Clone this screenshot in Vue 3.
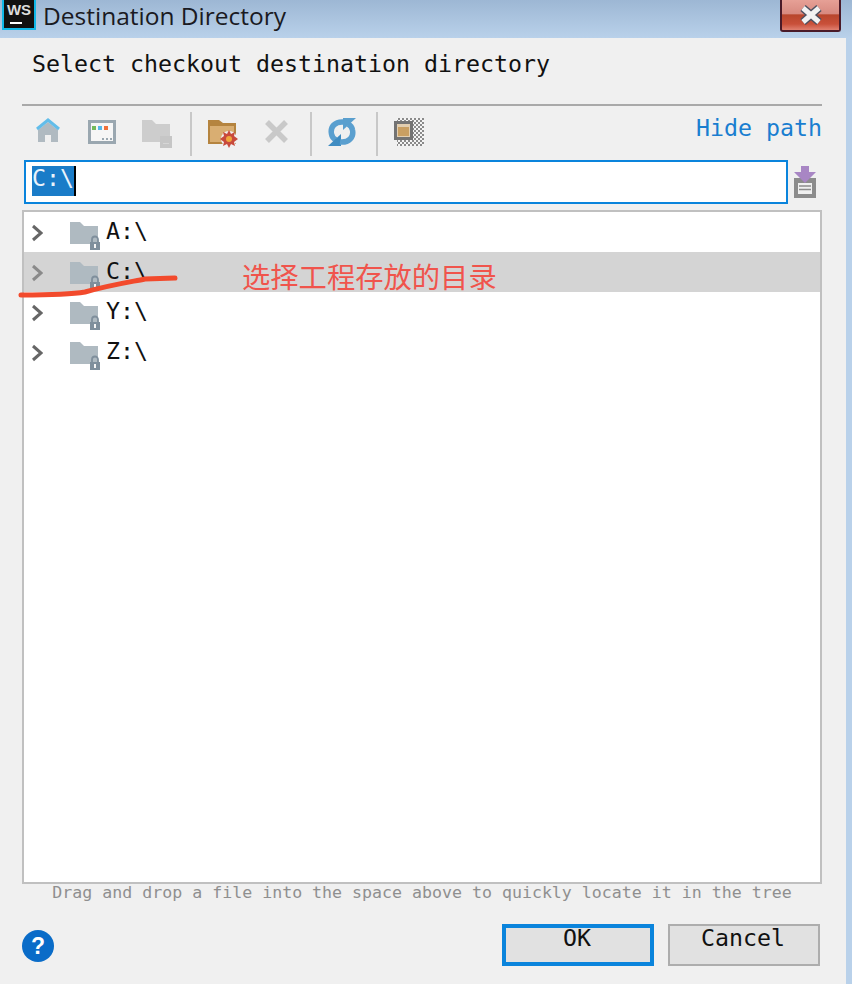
<template>
  <div class="window">
    <div class="titlebar">
      <svg class="logo" width="34" height="30" viewBox="0 0 34 30">
        <rect x="1" y="-1" width="32" height="30" fill="#111" stroke="#10b8e8" stroke-width="2" />
        <text x="17" y="15" text-anchor="middle" class="logo-text">WS</text>
        <rect x="8" y="22" width="12" height="2" fill="#fff" />
      </svg>
      <span class="title">Destination Directory</span>
      <div class="close">
        <svg width="26" height="20" viewBox="0 0 26 20">
          <path d="M5 3 L21 17 M21 3 L5 17" fill="none" stroke="#4c5060" stroke-width="8" />
          <path d="M5 3 L21 17 M21 3 L5 17" fill="none" stroke="#f2f2f2" stroke-width="5" />
        </svg>
      </div>
    </div>

    <div class="content">
      <div class="prompt">Select checkout destination directory</div>

      <div class="toolbar">
        <svg class="t-home" width="24" height="26" viewBox="0 0 24 26">
          <path d="M2 12 V24 H9 V17 H15 V24 H22 V12 L12 4 Z" fill="#b0bac1" />
          <path d="M1 11 L12 2 L23 11" fill="none" stroke="#62bdea" stroke-width="3" />
        </svg>
        <svg class="t-win" width="28" height="24" viewBox="0 0 28 24">
          <rect x="1.500" y="1.500" width="25" height="21" fill="#f6f6f6" stroke="#9aa7b0" stroke-width="3" />
          <rect x="4" y="6" width="4" height="4" fill="#74b95a" />
          <rect x="10" y="6" width="4" height="4" fill="#55b8e8" />
          <rect x="16" y="6" width="4" height="4" fill="#f0703a" />
          <rect x="14" y="18" width="2" height="2" fill="#9aa7b0" />
          <rect x="18" y="18" width="2" height="2" fill="#9aa7b0" />
          <rect x="22" y="18" width="2" height="2" fill="#9aa7b0" />
        </svg>
        <svg class="t-folder" width="30" height="28" viewBox="0 0 30 28">
          <path d="M0 0 H10 L14 4 H28 V22 H0 Z" fill="#cdcdcd" />
          <rect x="18" y="16" width="12" height="12" fill="#c6c6c6" />
          <rect x="21" y="23" width="6" height="1" fill="#d6d6d6" />
        </svg>
        <i class="sep"></i>
        <svg class="t-new" width="30" height="28" viewBox="0 0 30 28">
          <path d="M0 0 H11 L15 3 H28 V24 H0 Z" fill="#b5843f" />
          <path d="M2 6 H26 V22 H2 Z" fill="#d9ae72" />
          <circle cx="21" cy="19" r="8" fill="#f0f0f0" />
          <path d="M21 10 L23 14 L27 12 L26 16 L30 19 L26 22 L27 26 L23 24 L21 28 L19 24 L15 26 L16 22 L12 19 L16 16 L15 12 L19 14 Z" fill="#c84a3c" />
          <circle cx="21" cy="19" r="3" fill="#f0a63c" />
        </svg>
        <svg class="t-x" width="23" height="23" viewBox="0 0 23 23">
          <path d="M2 2 L21 21 M21 2 L2 21" stroke="#c9c9c9" stroke-width="5.500" />
        </svg>
        <i class="sep sep-x"></i>
        <svg class="t-sync" width="28" height="28" viewBox="0 0 28 28">
          <path d="M16 4 C7 3 2 9 3.500 16 C4 19 6 21 8 22" fill="none" stroke="#5a9fcf" stroke-width="5.500" />
          <path d="M0 28 L13 28 L13 16 Z" fill="#3f8cc2" />
          <path d="M12 24 C21 25 26 19 24.500 12 C24 9 22 7 20 6" fill="none" stroke="#5a9fcf" stroke-width="5.500" />
          <path d="M28 0 L15 0 L15 12 Z" fill="#5a9fce" />
        </svg>
        <i class="sep sep-sync"></i>
        <svg class="t-toggle" width="30" height="28" viewBox="0 0 30 28">
          <defs>
            <pattern id="chk" width="4" height="4" patternUnits="userSpaceOnUse">
              <rect width="4" height="4" fill="#f4f4f4" />
              <rect width="2" height="2" fill="#8a8a8a" />
              <rect x="2" y="2" width="2" height="2" fill="#8a8a8a" />
            </pattern>
          </defs>
          <rect x="3" y="0" width="27" height="28" fill="url(#chk)" />
          <rect x="1.500" y="4.500" width="16" height="16" fill="#e2ceb0" stroke="#737373" stroke-width="3" />
          <rect x="4" y="9" width="11" height="9" fill="#c99f62" />
        </svg>
        <span class="hide-path">Hide path</span>
      </div>

      <div class="path-row">
        <div class="path-input"><span class="selected">C:\</span></div>
        <svg class="import" width="22" height="32" viewBox="0 0 22 32">
          <path d="M0 12 H22 V32 H0 Z" fill="#8c8c8c" />
          <rect x="4" y="17" width="14" height="11" fill="#f0f0f0" />
          <path d="M5 20 H17 M5 23.500 H17" stroke="#8c8c8c" stroke-width="1.500" />
          <path d="M7 0 H15 V6 H22 L11 17 L0 6 H7 Z" fill="#a886c4" />
        </svg>
      </div>

      <div class="tree">
        <div v-for="(drive, index) in drives" :key="drive" class="row" :class="{ active: index === 1 }">
          <svg class="chevron" width="12" height="18" viewBox="0 0 12 18">
            <path d="M2 2 L10 9 L2 16" fill="none" stroke="currentColor" stroke-width="3" />
          </svg>
          <svg class="drive-icon" width="30" height="28" viewBox="0 0 30 28">
            <path d="M0 0 H10 L14 4 H28 V22 H0 Z" fill="#afbac1" />
            <path d="M22 20 V17.500 A3 3 0 0 1 28 17.500 V20" fill="none" stroke="#7f8f9c" stroke-width="1.800" />
            <rect x="20" y="20" width="10" height="8" fill="#7f8f9c" />
            <rect x="24" y="22" width="2" height="4" fill="#f4f4f4" />
          </svg>
          <span class="drive-name">{{ drive }}</span>
        </div>
      </div>

      <div class="hint">Drag and drop a file into the space above to quickly locate it in the tree</div>

      <div class="footer">
        <div class="help">?</div>
        <button class="btn primary" type="button">OK</button>
        <button class="btn" type="button">Cancel</button>
      </div>
    </div>

    <span class="note">选择工程存放的目录</span>
    <svg class="scribble" width="180" height="40" viewBox="0 0 180 40">
      <path d="M21 25 C45 25 68 25 85 22 C110 15 130 12 145 9 L175 8" fill="none" stroke="#f24a2c" stroke-width="5" stroke-linecap="round" />
    </svg>
  </div>
</template>

<script setup>
const drives = ['A:\\', 'C:\\', 'Y:\\', 'Z:\\']
</script>

<style>
html,
body {
  margin: 0;
  background: #f0f0f0;
}
</style>

<style scoped>
.window {
  position: relative;
  width: 852px;
  height: 984px;
  overflow: hidden;
  background: #b9d1ea;
  font-family: "DejaVu Sans Mono", "Liberation Mono", monospace;
  color: #111;
}

.titlebar {
  height: 38px;
  display: flex;
  align-items: flex-start;
  background: linear-gradient(#9db7d4, #b9d1ea);
}
.logo {
  margin-left: 2px;
}
.logo-text {
  font-family: "Liberation Sans", sans-serif;
  font-weight: 700;
  font-size: 15px;
  fill: #ddd;
}
.title {
  margin-left: 7px;
  font-family: "Open Sans", "Noto Sans", sans-serif;
  font-size: 24.5px;
  line-height: 32px;
  color: #1a1a22;
}
.close {
  margin-left: auto;
  margin-right: 11px;
  width: 57px;
  height: 30px;
  border: 2px solid #4a1a28;
  border-top: none;
  border-radius: 0 0 3px 3px;
  display: flex;
  align-items: center;
  justify-content: center;
  background: linear-gradient(#e6a096 0%, #d88a80 45%, #b8462c 50%, #c9503a 80%, #e08070 100%);
}

.content {
  width: 846px;
  height: 946px;
  box-sizing: border-box;
  padding: 0 24px 0 22px;
  background: #f0f0f0;
}

.prompt {
  height: 68px;
  box-sizing: border-box;
  padding: 10px 0 0 10px;
  font-size: 23.25px;
  line-height: 32px;
  border-bottom: 2px solid #a9a9a9;
}

.toolbar {
  height: 54px;
  box-sizing: border-box;
  padding: 6px 0 0 14px;
  display: flex;
  align-items: flex-start;
}
.toolbar svg {
  flex: none;
}
.t-home {
  margin-top: 6px;
}
.t-win {
  margin: 8px 0 0 28px;
}
.t-folder {
  margin: 8px 0 0 26px;
}
.t-new {
  margin: 8px 0 0 16px;
}
.t-x {
  margin: 8px 0 0 27px;
}
.t-sync {
  margin: 6px 0 0 16px;
}
.t-toggle {
  margin: 6px 0 0 16px;
}
.sep {
  flex: none;
  width: 2px;
  height: 44px;
  margin-left: 18px;
  background: #c8c8c8;
}
.sep.sep-x {
  margin-left: 22px;
}
.sep.sep-sync {
  margin-left: 20px;
}
.hide-path {
  margin-left: auto;
  font-size: 23.25px;
  line-height: 32px;
  color: #1a7ed0;
}

.path-row {
  height: 44px;
  padding-left: 2px;
  display: flex;
  gap: 6px;
}
.path-input {
  width: 764px;
  box-sizing: border-box;
  padding: 4px 0 0 6px;
  border: 2px solid #0a84dc;
  background: #fff;
  font-size: 23.25px;
  line-height: 30px;
}
.selected {
  display: inline-block;
  height: 30px;
  line-height: 24px;
  vertical-align: top;
  background: #1a7cc8;
  color: #eaf3fb;
  border-right: 2px solid #000;
}
.import {
  margin-top: 6px;
}

.tree {
  margin-top: 6px;
  height: 674px;
  box-sizing: border-box;
  border: 2px solid #c0c0c0;
  background: #fff;
}
.row {
  height: 40px;
  display: flex;
  align-items: center;
  font-size: 23.25px;
  color: #666;
}
.row.active {
  background: #d4d4d4;
  color: #8a8a8a;
}
.chevron {
  margin-left: 7px;
  margin-top: 2px;
}
.drive-icon {
  margin: 8px 0 0 27px;
  overflow: visible;
}
.drive-name {
  margin-left: 6px;
  margin-top: -4px;
  color: #111;
}

.hint {
  height: 18px;
  text-align: center;
  font-size: 16.6px;
  line-height: 18px;
  color: #8f8f8f;
}

.footer {
  margin-top: 22px;
  margin-right: 2px;
  height: 42px;
  display: flex;
  align-items: center;
}
.help {
  width: 32px;
  height: 32px;
  border-radius: 50%;
  background: #0a6cc8;
  color: #fff;
  font-family: "Liberation Sans", sans-serif;
  font-weight: 700;
  font-size: 23px;
  line-height: 32px;
  text-align: center;
  margin-top: 2px;
  margin-right: auto;
}
.btn {
  width: 152px;
  height: 42px;
  box-sizing: border-box;
  padding: 0 2px 14px 0;
  background: #e1e1e1;
  border: 2px solid #adadad;
  border-radius: 0;
  font-family: inherit;
  font-size: 23.25px;
  line-height: 24px;
  color: #111;
}
.btn.primary {
  border: 4px solid #0a84dc;
  margin-right: 14px;
  line-height: 20px;
}

.note {
  position: absolute;
  left: 242px;
  top: 259px;
  font-family: "Noto Sans CJK SC", sans-serif;
  font-size: 28.3px;
  line-height: 34px;
  color: #f0544c;
  white-space: nowrap;
}
.scribble {
  position: absolute;
  left: 0;
  top: 270px;
}
</style>
